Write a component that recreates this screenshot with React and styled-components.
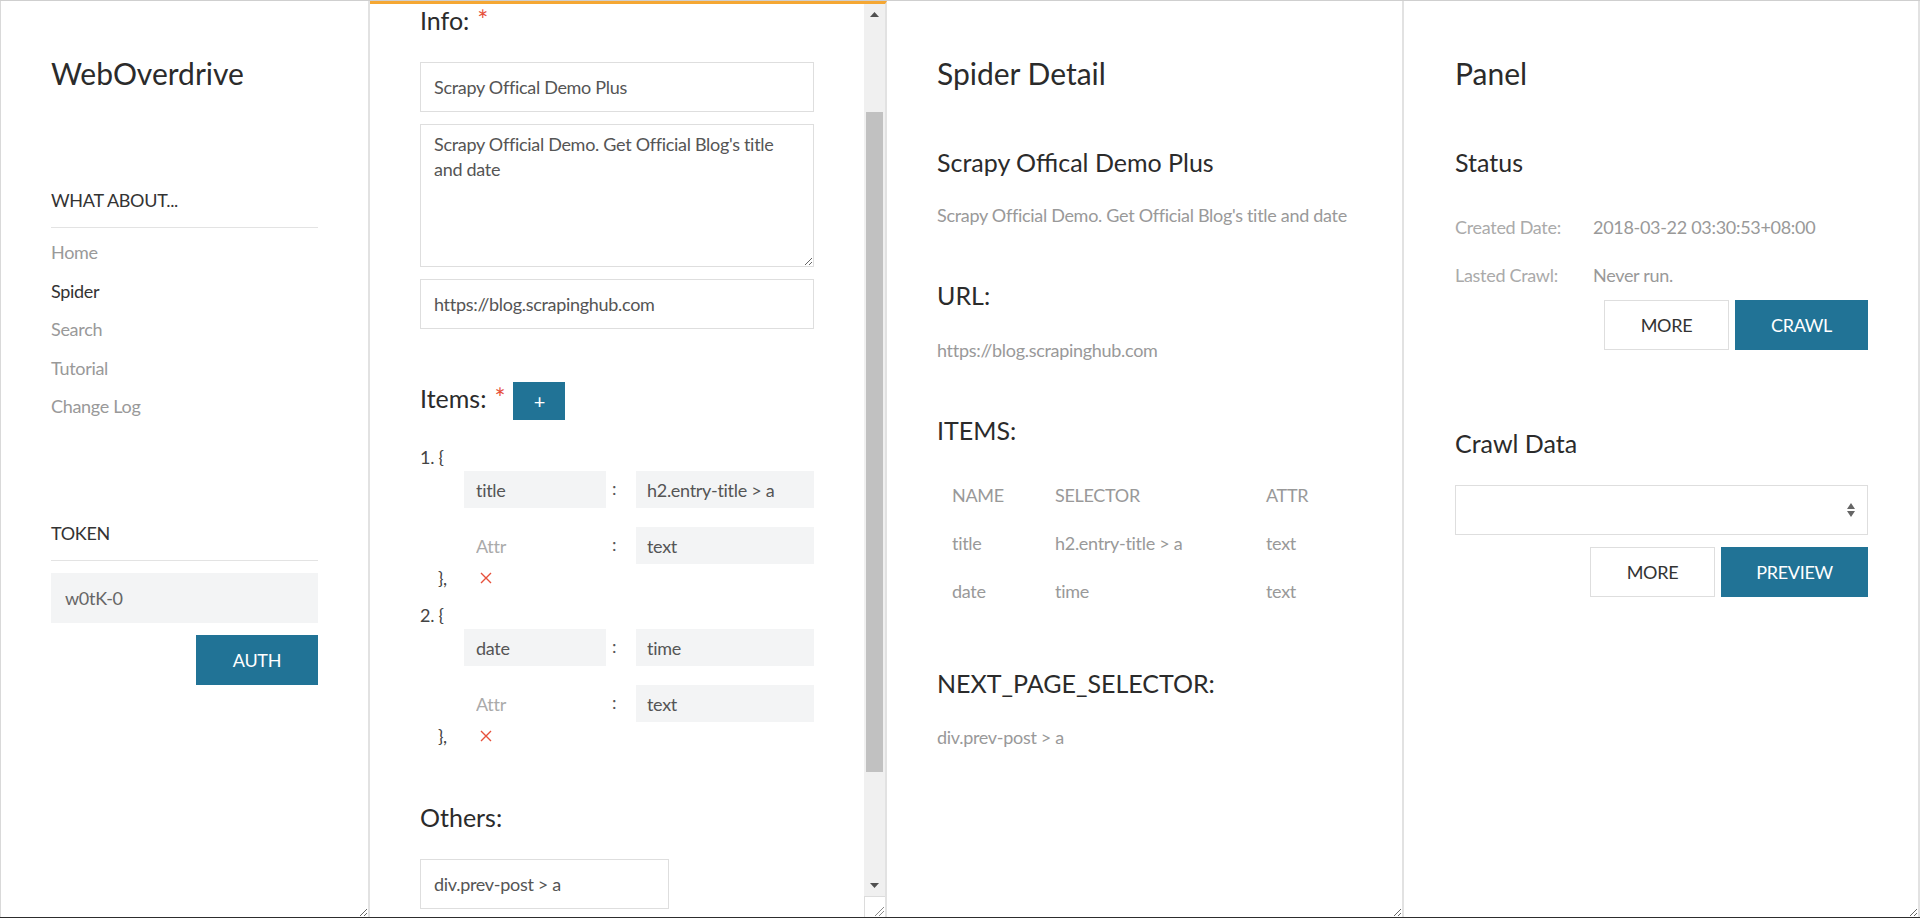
import React from 'react'
import styled, { createGlobalStyle, css } from 'styled-components'

const PRIMARY = '#217396'
const LINE = '#e2e2e2'
const FIELD = '#f3f4f5'
const RED = '#e6503b'
const INK = '#2b2b2b'

const bodyText = css`
    font-family: Lato, "Open Sans", sans-serif;
    font-size: 18px;
    letter-spacing: -0.3px;
`

const GlobalStyle = createGlobalStyle`
    html, body {
        margin: 0;
        padding: 0;
        background: #fff;
    }
    body {
        font-family: Lato, "Open Sans", sans-serif;
        color: #333;
    }
    *, *::before, *::after {
        box-sizing: border-box;
    }
`

const Page = styled.div`
    display: flex;
    height: 918px;
    border-top: 1px solid #cfcfcf;
    border-bottom: 1px solid #2d2d2d;
    overflow: hidden;
`

const Column = styled.section`
    flex: 0 0 ${p => p.$width}px;
    height: 100%;
    padding: 52px 50px 0 ${p => p.$padLeft || 50}px;
    border-right: 2px solid ${LINE};
    border-left: ${p => (p.$first ? '1px solid #d9d9d9' : 'none')};
    overflow: hidden;
    resize: horizontal;
`

const EditorColumn = styled.section`
    flex: 0 0 517px;
    height: 100%;
    display: flex;
    border-top: 3px solid #f5a733;
    border-right: 2px solid ${LINE};
    overflow: hidden;
`

const EditorBody = styled.div`
    flex: 1;
    padding: 0 50px;
    overflow: hidden;
`

const Title = styled.h1`
    margin: 0;
    font-size: 30px;
    font-weight: 400;
    line-height: 40px;
    color: ${INK};
`

const Heading = styled.h3`
    margin: ${p => p.$mt || 0}px 0 0;
    font-size: 25px;
    font-weight: 400;
    line-height: 32px;
    color: ${INK};
`

const Required = styled.span`
    margin-left: 8px;
    color: ${RED};
    font-size: 26px;
`

const SectionLabel = styled.div`
    ${bodyText};
    margin-top: 93px;
    padding-bottom: 13px;
    border-bottom: 1px solid #e3e3e3;
    line-height: 28px;
    color: #333;
`

const NavList = styled.ul`
    list-style: none;
    margin: 0;
    padding: 5px 0 0;
`

const NavItem = styled.li`
    ${bodyText};
    line-height: 38.5px;
    color: ${p => (p.$active ? '#333' : '#999')};
    cursor: pointer;
`

const TokenInput = styled.input`
    ${bodyText};
    display: block;
    width: 100%;
    height: 50px;
    margin-top: 12.5px;
    padding: 0 14px;
    border: none;
    background: ${FIELD};
    color: #666;
    outline: none;
`

const ButtonRow = styled.div`
    display: flex;
    justify-content: flex-end;
    gap: 6px;
    margin-top: ${p => p.$mt || 0}px;
`

const Button = styled.button`
    ${bodyText};
    width: ${p => p.$w}px;
    height: 50px;
    padding: 0;
    border: 1px solid ${p => (p.$primary ? PRIMARY : '#dedede')};
    background: ${p => (p.$primary ? PRIMARY : '#fff')};
    color: ${p => (p.$primary ? '#fff' : '#333')};
    cursor: pointer;
`

const TextInput = styled.input`
    ${bodyText};
    display: block;
    width: ${p => (p.$w ? `${p.$w}px` : '100%')};
    height: 50px;
    margin-top: ${p => p.$mt || 0}px;
    padding: 0 13px;
    border: 1px solid #dedede;
    background: #fff;
    color: #555;
    outline: none;
`

const TextArea = styled.textarea`
    ${bodyText};
    display: block;
    width: 100%;
    height: 143px;
    margin-top: 12px;
    padding: 7px 13px;
    border: 1px solid #dedede;
    line-height: 25px;
    color: #555;
    outline: none;
`

const ItemsHeader = styled.div`
    display: flex;
    align-items: flex-start;
    margin-top: 53px;
    height: 38px;
`

const AddButton = styled.button`
    width: 52px;
    height: 38px;
    margin-left: 8px;
    border: none;
    background: ${PRIMARY};
    color: #fff;
    font-family: inherit;
    font-size: 20px;
    cursor: pointer;
`

const ItemBlock = styled.div`
    ${bodyText};
    margin-top: ${p => p.$mt}px;
    color: #444;
`

const BraceLine = styled.div`
    display: flex;
    align-items: center;
    height: 28px;
    line-height: 28px;
    padding-left: ${p => p.$indent || 0}px;
`

const Brace = styled.span`
    width: 42px;
`

const FieldRow = styled.div`
    display: grid;
    grid-template-columns: 142px 30px 178px;
    height: 37px;
    margin-top: ${p => p.$mt || 0}px;
    padding-left: 44px;
`

const Field = styled.input`
    ${bodyText};
    width: 100%;
    height: 100%;
    padding: 0 12px 0 ${p => p.$padLeft || 12}px;
    border: none;
    background: ${p => (p.$filled ? FIELD : 'transparent')};
    color: #555;
    outline: none;

    &::placeholder {
        color: #aaa;
    }
`

const Colon = styled.span`
    display: flex;
    align-items: center;
    padding: 0 0 4px 6px;
    color: #555;
`

const Muted = styled.div`
    ${bodyText};
    margin-top: ${p => p.$mt || 0}px;
    line-height: 28px;
    color: #999;
    white-space: nowrap;
`

const Table = styled.div`
    display: grid;
    grid-template-columns: 103px 211px 1fr;
    margin-top: 25px;
`

const Cell = styled.div`
    ${bodyText};
    padding-left: 15px;
    line-height: 48px;
    color: #999;
`

const InfoGrid = styled.div`
    ${bodyText};
    display: grid;
    grid-template-columns: 138px 1fr;
    margin-top: 25px;
    line-height: 48px;
`

const InfoLabel = styled.span`
    color: #aaa;
`

const InfoValue = styled.span`
    color: #999;
`

const SelectBox = styled.div`
    display: flex;
    align-items: center;
    height: 50px;
    margin-top: 26px;
    padding: 0 12px 0 14px;
    border: 1px solid #dedede;
`

const Select = styled.select`
    ${bodyText};
    flex: 1;
    height: 100%;
    border: none;
    background: transparent;
    appearance: none;
    outline: none;
`

const ScrollBar = styled.div`
    flex: 0 0 21px;
    display: flex;
    flex-direction: column;
    background: #f0f0f0;
`

const ScrollArrow = styled.div`
    height: 21px;
    display: flex;
    align-items: center;
    justify-content: center;
`

const ScrollTrack = styled.div`
    flex: 1;
    padding: 87px 2px 0;
`

const Thumb = styled.div`
    height: 660px;
    background: #c1c1c1;
`

const ScrollCorner = styled.div`
    height: 21px;
    display: flex;
    align-items: flex-end;
    justify-content: flex-end;
    background: #fff;
    border-top: 1px solid #dcdcdc;
    border-left: 1px solid #dcdcdc;
`

function Triangle({ up }) {
    return (
        <svg width="9" height="5" viewBox="0 0 9 5">
            <path d={up ? 'M0 5 L4.5 0 L9 5 Z' : 'M0 0 L4.5 5 L9 0 Z'} fill="#505050" />
        </svg>
    )
}

function Grip() {
    return (
        <svg width="12" height="12" viewBox="0 0 12 12">
            <path d="M2 11 L11 2 M6 11 L11 6" stroke="#8a8a8a" strokeWidth="1" />
        </svg>
    )
}

function Cross() {
    return (
        <svg width="12" height="12" viewBox="0 0 12 12">
            <path d="M1 1 L11 11 M11 1 L1 11" stroke={RED} strokeWidth="1.4" />
        </svg>
    )
}

function SortArrows() {
    return (
        <svg width="8" height="14" viewBox="0 0 8 14">
            <path d="M0 6 L4 0 L8 6 Z M0 8 L4 14 L8 8 Z" fill="#666" />
        </svg>
    )
}

const items = [
    { name: 'title', selector: 'h2.entry-title > a', attr: 'text' },
    { name: 'date', selector: 'time', attr: 'text' },
]

function ItemEditor({ index, item, mt }) {
    return (
        <ItemBlock $mt={mt}>
            <BraceLine>{index}. {'{'}</BraceLine>
            <FieldRow>
                <Field $filled defaultValue={item.name} />
                <Colon>:</Colon>
                <Field $filled $padLeft={11} defaultValue={item.selector} />
            </FieldRow>
            <FieldRow $mt={19}>
                <Field placeholder="Attr" />
                <Colon>:</Colon>
                <Field $filled $padLeft={11} defaultValue={item.attr} />
            </FieldRow>
            <BraceLine $indent={18}>
                <Brace>{'},'}</Brace>
                <Cross />
            </BraceLine>
        </ItemBlock>
    )
}

export default function App() {
    return (
        <>
            <GlobalStyle />
            <Page>
                <Column $width={370} $first>
                    <Title>WebOverdrive</Title>
                    <SectionLabel>WHAT ABOUT...</SectionLabel>
                    <NavList>
                        <NavItem>Home</NavItem>
                        <NavItem $active>Spider</NavItem>
                        <NavItem>Search</NavItem>
                        <NavItem>Tutorial</NavItem>
                        <NavItem>Change Log</NavItem>
                    </NavList>
                    <SectionLabel>TOKEN</SectionLabel>
                    <TokenInput defaultValue="w0tK-0" />
                    <ButtonRow $mt={12}>
                        <Button $primary $w={122}>AUTH</Button>
                    </ButtonRow>
                </Column>

                <EditorColumn>
                    <EditorBody>
                        <Heading>Info:<Required>*</Required></Heading>
                        <TextInput $mt={26} defaultValue="Scrapy Offical Demo Plus" />
                        <TextArea defaultValue="Scrapy Official Demo. Get Official Blog's title and date" />
                        <TextInput $mt={12} defaultValue="https://blog.scrapinghub.com" />

                        <ItemsHeader>
                            <Heading>Items:<Required>*</Required></Heading>
                            <AddButton>+</AddButton>
                        </ItemsHeader>
                        {items.map((item, i) => (
                            <ItemEditor key={item.name} index={i + 1} item={item} mt={i === 0 ? 23 : 9} />
                        ))}

                        <Heading $mt={51}>Others:</Heading>
                        <TextInput $mt={26} $w={249} defaultValue="div.prev-post > a" />
                    </EditorBody>
                    <ScrollBar>
                        <ScrollArrow><Triangle up /></ScrollArrow>
                        <ScrollTrack><Thumb /></ScrollTrack>
                        <ScrollArrow><Triangle /></ScrollArrow>
                        <ScrollCorner><Grip /></ScrollCorner>
                    </ScrollBar>
                </EditorColumn>

                <Column $width={517}>
                    <Title>Spider Detail</Title>
                    <Heading $mt={53}>Scrapy Offical Demo Plus</Heading>
                    <Muted $mt={23}>Scrapy Official Demo. Get Official Blog's title and date</Muted>
                    <Heading $mt={50}>URL:</Heading>
                    <Muted $mt={25}>https://blog.scrapinghub.com</Muted>
                    <Heading $mt={50}>ITEMS:</Heading>
                    <Table>
                        <Cell>NAME</Cell>
                        <Cell>SELECTOR</Cell>
                        <Cell>ATTR</Cell>
                        {items.map(item => (
                            <React.Fragment key={item.name}>
                                <Cell>{item.name}</Cell>
                                <Cell>{item.selector}</Cell>
                                <Cell>{item.attr}</Cell>
                            </React.Fragment>
                        ))}
                    </Table>
                    <Heading $mt={52}>NEXT_PAGE_SELECTOR:</Heading>
                    <Muted $mt={24}>div.prev-post &gt; a</Muted>
                </Column>

                <Column $width={516} $padLeft={51}>
                    <Title>Panel</Title>
                    <Heading $mt={53}>Status</Heading>
                    <InfoGrid>
                        <InfoLabel>Created Date:</InfoLabel>
                        <InfoValue>2018-03-22 03:30:53+08:00</InfoValue>
                        <InfoLabel>Lasted Crawl:</InfoLabel>
                        <InfoValue>Never run.</InfoValue>
                    </InfoGrid>
                    <ButtonRow $mt={1}>
                        <Button $w={125}>MORE</Button>
                        <Button $primary $w={133}>CRAWL</Button>
                    </ButtonRow>
                    <Heading $mt={77}>Crawl Data</Heading>
                    <SelectBox>
                        <Select defaultValue="">
                            <option value="" />
                        </Select>
                        <SortArrows />
                    </SelectBox>
                    <ButtonRow $mt={12}>
                        <Button $w={125}>MORE</Button>
                        <Button $primary $w={147}>PREVIEW</Button>
                    </ButtonRow>
                </Column>
            </Page>
        </>
    )
}
